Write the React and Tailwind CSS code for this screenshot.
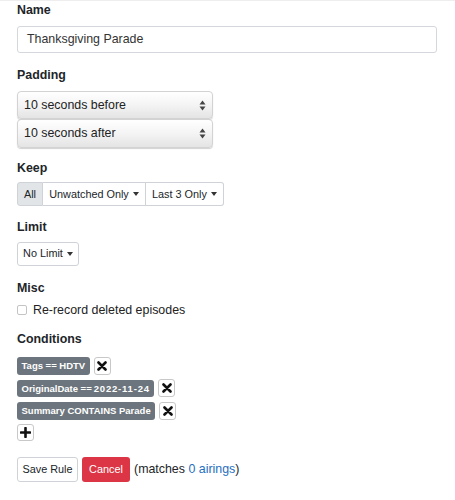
import React from "react";

const labelCls = "block text-[12.4px] font-bold leading-[18.6px] text-[#212529]";

function Caret() {
  return <span className="inline-block ml-[4px] border-t-[4px] border-t-[#333] border-x-[3px] border-x-transparent" />;
}

function UpDown() {
  return (
    <svg width="7" height="11" viewBox="0 0 7 11" className="shrink-0">
      <path d="M3.5 0.5 L6.5 4.5 L0.5 4.5 Z" fill="#444" />
      <path d="M3.5 10.5 L6.5 6.5 L0.5 6.5 Z" fill="#444" />
    </svg>
  );
}

function Select({ children }) {
  return (
    <div className="flex items-center justify-between w-[196px] h-[28.5px] pl-[6px] pr-[6px] rounded-[4px] border border-[#d3d3d3] bg-gradient-to-b from-[#ffffff] via-[#f4f4f4] to-[#e4e4e4] shadow-[0_1px_1px_rgba(0,0,0,0.18)] text-[12.4px] text-[#222]">
      <span>{children}</span>
      <UpDown />
    </div>
  );
}

function XButton() {
  return (
    <div className="flex items-center justify-center w-[17px] h-[18px] rounded-[3px] border border-[#c8c8c8] bg-white">
      <svg width="10" height="10" viewBox="0 0 10 10">
        <path d="M1.5 1.5 L8.5 8.5 M8.5 1.5 L1.5 8.5" stroke="#111" strokeWidth="2.6" strokeLinecap="round" />
      </svg>
    </div>
  );
}

function Badge({ children }) {
  return (
    <span className="flex items-center h-[17.5px] px-[4.5px] rounded-[3px] bg-[#6c757d] text-white text-[9.5px] font-bold leading-none">
      {children}
    </span>
  );
}

export default function App() {
  return (
    <div className="min-h-[500px] bg-white border-t border-[#eeeeee] px-[17px] text-[#212529]" style={{ fontFamily: '"Liberation Sans", Arial, sans-serif' }}>
      <div className="mb-[12.4px]">
        <label className={labelCls + " mb-[6.4px]"}>Name</label>
        <div className="flex items-center h-[27.5px] w-[420px] rounded-[3px] border border-[#d4d8dc] px-[9px] text-[12.4px] text-[#333]">
          Thanksgiving Parade
        </div>
      </div>

      <div className="mb-[11.4px]">
        <label className={labelCls + " mb-[6.4px]"}>Padding</label>
        <Select>10 seconds before</Select>
        <Select>10 seconds after</Select>
      </div>

      <div className="mb-[11.4px]">
        <label className={labelCls + " mb-[4.4px]"}>Keep</label>
        <div className="flex w-fit h-[24px] text-[10.85px] text-[#212529]">
          <div className="flex items-center w-[26px] justify-center border border-[#cfd3d7] bg-[#e2e5e8] rounded-l-[3px]">All</div>
          <div className="flex items-center w-[103px] justify-center border-y border-r border-[#cfd3d7] bg-white">
            Unwatched Only<Caret />
          </div>
          <div className="flex items-center w-[78px] justify-center border-y border-r border-[#cfd3d7] bg-white rounded-r-[3px]">
            Last 3 Only<Caret />
          </div>
        </div>
      </div>

      <div className="mb-[13.4px]">
        <label className={labelCls + " mb-[5.4px]"}>Limit</label>
        <div className="flex items-center justify-center h-[24px] w-[62px] border border-[#cfd3d7] rounded-[3px] text-[10.85px]">
          No Limit<Caret />
        </div>
      </div>

      <div className="mb-[11px]">
        <label className={labelCls + " mb-[3px]"}>Misc</label>
        <div className="flex items-center h-[18.6px] text-[12.4px] text-[#222]">
          <span className="w-[10px] h-[10px] rounded-[2px] border border-[#c4c4c4] bg-white mr-[6px]" />
          Re-record deleted episodes
        </div>
      </div>

      <div>
        <label className={labelCls + " mb-[8px]"}>Conditions</label>
        <div className="flex flex-col gap-[4.5px]">
          <div className="flex items-center gap-[4px]">
            <Badge>Tags == HDTV</Badge>
            <XButton />
          </div>
          <div className="flex items-center gap-[4px]">
            <Badge>
              OriginalDate == <span className="ml-[2px] tracking-[0.8px]">2022-11-24</span>
            </Badge>
            <XButton />
          </div>
          <div className="flex items-center gap-[4px]">
            <Badge>Summary CONTAINS Parade</Badge>
            <XButton />
          </div>
          <div className="flex items-center justify-center w-[17px] h-[17px] rounded-[3px] border border-[#c8c8c8] bg-white">
            <svg width="11" height="11" viewBox="0 0 11 11">
              <path d="M5.5 1 L5.5 10 M1 5.5 L10 5.5" stroke="#111" strokeWidth="2.6" strokeLinecap="round" />
            </svg>
          </div>
        </div>
      </div>

      <div className="flex items-center gap-[4px] mt-[16px]">
        <div className="flex items-center justify-center h-[24.5px] w-[61px] rounded-[3px] border border-[#cfd3d7] text-[10.85px] text-[#212529]">
          Save Rule
        </div>
        <div className="flex items-center justify-center h-[24.5px] w-[48px] rounded-[3px] bg-[#dc3545] text-[10.85px] text-white">
          Cancel
        </div>
        <span className="text-[12.4px] text-[#212529]">
          (matches <a className="text-[#1f6fbf]">0 airings</a>)
        </span>
      </div>
    </div>
  );
}
